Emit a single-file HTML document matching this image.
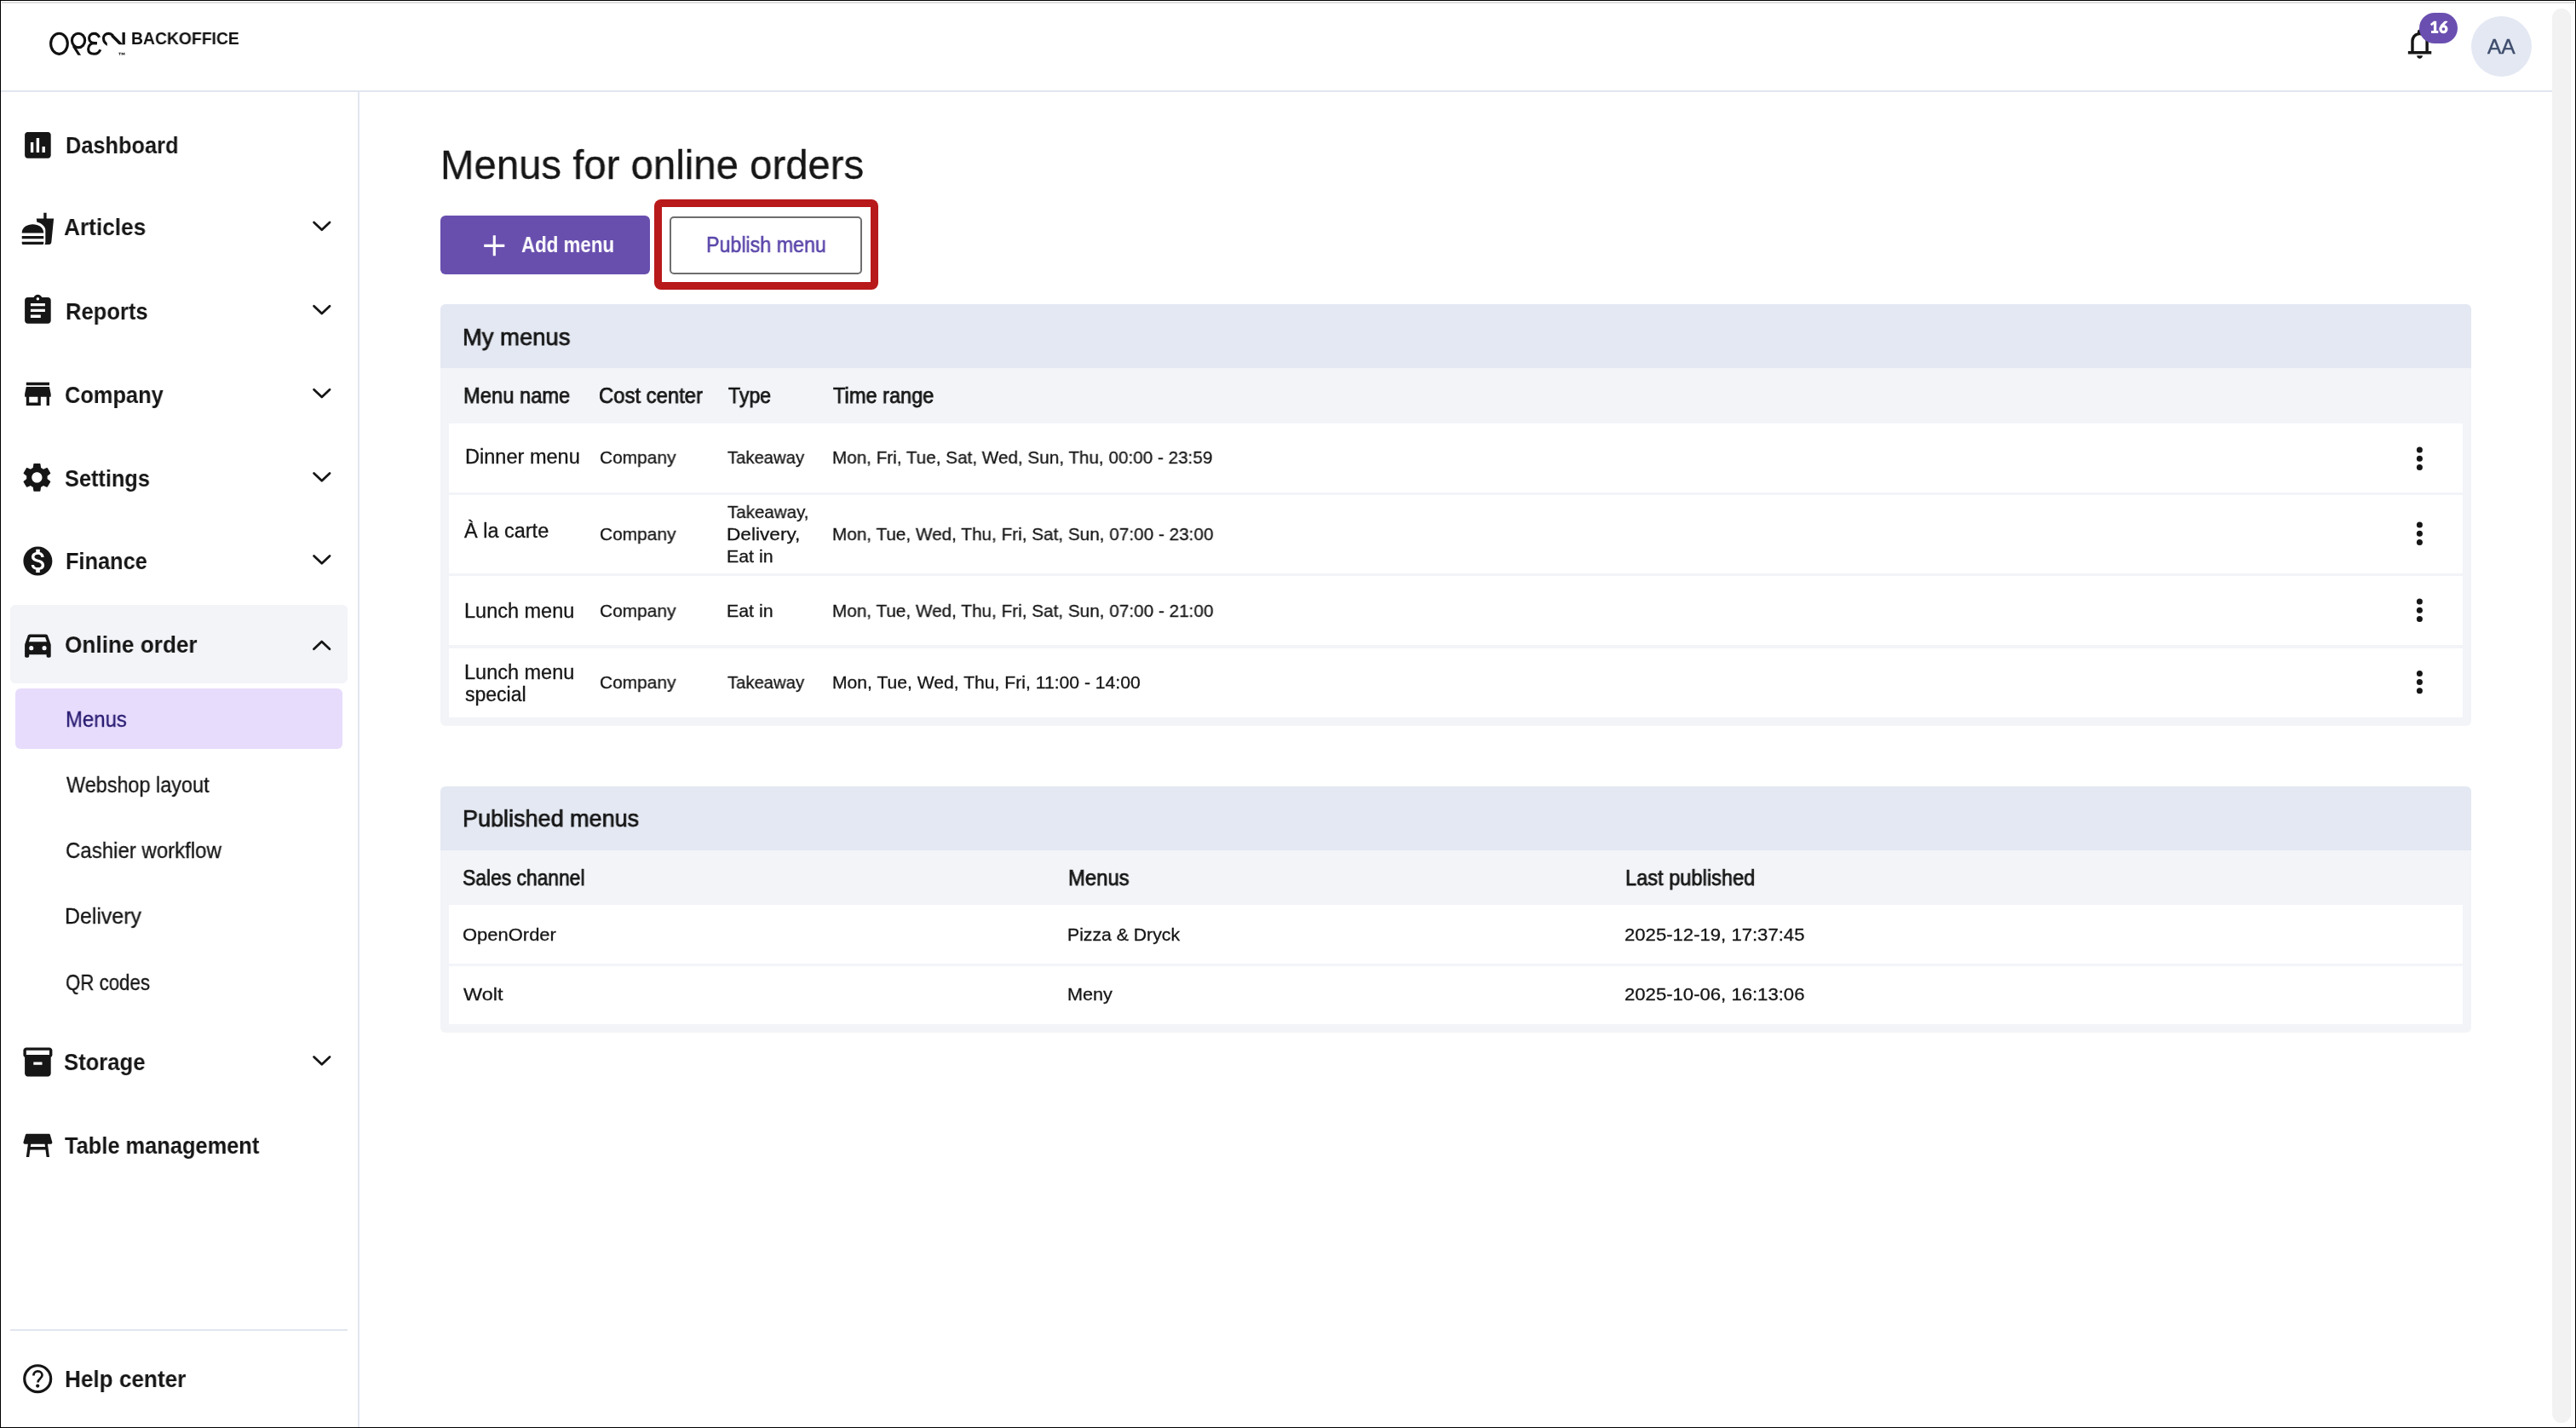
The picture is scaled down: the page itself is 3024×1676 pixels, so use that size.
<!DOCTYPE html>
<html><head><meta charset="utf-8"><style>
html,body{margin:0;padding:0;}
body{width:3024px;height:1676px;overflow:hidden;position:relative;background:#fff;font-family:"Liberation Sans",sans-serif;color:#161616;}
.t{position:absolute;white-space:nowrap;will-change:transform;}
.t.rg{-webkit-text-stroke:0.3px currentColor;}
.t.md{-webkit-text-stroke:0.75px currentColor;}
.abs{position:absolute;}
#pubTxt{-webkit-text-stroke:0.55px #5b46aa;}
#aa{-webkit-text-stroke:0.45px #3f4d6c;}
</style></head><body>
<!-- window frame -->
<div class="abs" style="left:0;top:0;width:3024px;height:1px;background:#000"></div>
<div class="abs" style="left:0;top:1675px;width:3024px;height:1px;background:#000"></div>
<div class="abs" style="left:0;top:0;width:1px;height:1676px;background:#000"></div>
<div class="abs" style="left:3023px;top:0;width:1px;height:1676px;background:#000"></div>
<div class="abs" style="left:2px;top:2px;width:3020px;height:2px;background:#dedede"></div>
<!-- scrollbar -->
<div class="abs" style="left:2996px;top:10px;width:22px;height:1660px;border-radius:11px;background:#f2f2f2"></div>
<!-- header border -->
<div class="abs" style="left:1px;top:106px;width:2995px;height:2px;background:#e1e6f0"></div>
<!-- sidebar border -->
<div class="abs" style="left:420px;top:108px;width:2px;height:1567px;background:#e1e6f0"></div>
<svg style="position:absolute;left:0;top:0" width="300" height="100" viewBox="0 0 300 100">
<defs><clipPath id="lc1"><rect x="0" y="0" width="300" height="64.8"/></clipPath>
<clipPath id="lc2"><rect x="0" y="0" width="300" height="52.2"/></clipPath>
<clipPath id="lc3"><path d="M0 0H300V47H125.8V100H0Z"/></clipPath></defs>
<g fill="none" stroke="#111" stroke-width="3.1">
<ellipse cx="69.45" cy="51.3" rx="9.85" ry="12.05"/>
<ellipse cx="92.05" cy="47.5" rx="7.6" ry="8.25"/>
<path clip-path="url(#lc1)" d="M86.3 54.0 L94.4 66.6"/>
<path d="M116.6 43.9 C115.4 40.6 113.2 39.35 110.5 39.35 C106.5 39.35 104.6 42 104.6 44.8 C104.6 48.3 107.4 50.65 111 50.65 L113.8 50.65"/>
<path d="M113.8 50.65 L110.8 50.65 C106 50.65 103.65 53.8 103.65 57.8 C103.65 61.4 106.3 63.3 110.6 63.3 C114.4 63.3 116.6 61.3 117.8 58.2"/>
<path clip-path="url(#lc3)" d="M126.6 52.6 C122.9 50.8 121.5 47.6 121.5 44.8 C121.5 41.6 124 39.35 127.6 39.35 C129.8 39.35 131.2 40.2 132.5 41.5"/>
<path clip-path="url(#lc2)" stroke-width="3.5" d="M131.4 41.6 L143.4 53.6"/>
</g>
<rect x="143.5" y="38" width="3.3" height="14.3" fill="#111"/>
<path fill="#111" d="M139.2 61.7h2.9v0.8h-1.05v2.3h-0.8v-2.3h-1.05z M142.7 61.7h0.9l0.95 1.6l0.95-1.6h0.9v3.1h-0.8v-1.9l-0.85 1.4h-0.4l-0.85-1.4v1.9h-0.8z"/>
</svg>
<!-- badge & avatar -->
<div class="abs" style="left:2936.2px;top:19px;width:71px;height:71px;margin-left:-35.5px;border-radius:50%;background:#e3e8f3"></div>
<!-- sidebar highlight -->
<div class="abs" style="left:12px;top:710px;width:396px;height:92px;border-radius:6px;background:#f2f4f8"></div>
<div class="abs" style="left:18px;top:808px;width:384px;height:71px;border-radius:6px;background:#e7dcfc"></div>
<div class="abs" style="left:12px;top:1560px;width:396px;height:2px;background:#e1e6f0"></div>
<!-- buttons -->
<div class="abs" style="left:517px;top:253.3px;width:246px;height:68.5px;border-radius:6px;background:#684fae"></div>
<div class="abs" style="left:768px;top:234px;width:263px;height:106px;border-radius:8px;background:#b8191b"></div>
<div class="abs" style="left:777px;top:243px;width:245px;height:88px;background:#fff"></div>
<div class="abs" style="left:786px;top:254px;width:226px;height:67.5px;box-sizing:border-box;border:2px solid #6e6e6e;border-radius:5px;background:#fff"></div>
<!-- card 1 -->
<div class="abs" style="left:517px;top:357px;width:2384px;height:495px;border-radius:6px;background:#f2f4f8;overflow:hidden">
  <div class="abs" style="left:0;top:0;width:2384px;height:75px;background:#e3e8f2"></div>
  <div class="abs" style="left:10px;top:140px;width:2364px;height:81px;background:#fff"></div>
  <div class="abs" style="left:10px;top:224px;width:2364px;height:92px;background:#fff"></div>
  <div class="abs" style="left:10px;top:319px;width:2364px;height:81px;background:#fff"></div>
  <div class="abs" style="left:10px;top:403.5px;width:2364px;height:81.5px;background:#fff"></div>
</div>
<!-- card 2 -->
<div class="abs" style="left:517px;top:923px;width:2384px;height:288.5px;border-radius:6px;background:#f2f4f8;overflow:hidden">
  <div class="abs" style="left:0;top:0;width:2384px;height:75px;background:#e3e8f2"></div>
  <div class="abs" style="left:10px;top:139px;width:2364px;height:68.5px;background:#fff"></div>
  <div class="abs" style="left:10px;top:211px;width:2364px;height:67.5px;background:#fff"></div>
</div>
<svg style="position:absolute;left:2819.75px;top:31.37px" width="41.10" height="41.10" viewBox="0 -960 960 960"><path fill="#161616" d="M160-200v-80h80v-280q0-83 50-147.5T420-792v-28q0-25 17.5-42.5T480-880q25 0 42.5 17.5T540-820v28q80 20 130 84.5T720-560v280h80v80H160Zm320 120q-33 0-56.5-23.5T400-160h160q0 33-23.5 56.5T480-80ZM320-280h320v-280q0-66-47-113t-113-47q-66 0-113 47t-47 113v280Z"/></svg>
<div class="abs" style="left:2840.4px;top:15px;width:45px;height:36px;border-radius:18px;background:#6a4fb0"></div>
<svg class="abs" style="left:2840px;top:15px" width="46" height="36" viewBox="2840 15 46 36">
<defs><clipPath id="bc1"><rect x="2840" y="24.8" width="46" height="20"/></clipPath></defs>
<g fill="#fff"><rect x="2856.9" y="24.8" width="3.3" height="12.5"/><rect x="2854" y="36.1" width="8.3" height="2.8"/></g>
<g fill="none" stroke="#fff" stroke-width="2.7" clip-path="url(#bc1)">
<path d="M2858.4 25.6 L2853.7 29.2"/>
<circle cx="2868.4" cy="34.1" r="3.5" stroke-width="3.3"/>
<path d="M2865.6 31.2 L2872.4 24.2" stroke-width="3.1"/>
</g></svg>
<svg style="position:absolute;left:23.80px;top:149.90px" width="40.80" height="40.80" viewBox="0 0 24 24"><path fill="#161616" fill-rule="evenodd" d="M19 3H5c-1.1 0-2 .9-2 2v14c0 1.1.9 2 2 2h14c1.1 0 2-.9 2-2V5c0-1.1-.9-2-2-2zM9 17H7v-7h2v7zm4 0h-2V7h2v10zm4 0h-2v-4h2v4z"/></svg><svg style="position:absolute;left:23.90px;top:248.30px" width="40.80" height="40.80" viewBox="0 0 24 24"><path fill="#161616" fill-rule="evenodd" d="M18.06 22.99h1.66c.84 0 1.53-.64 1.63-1.46L23 5.05h-5V1h-1.97v4.05h-4.97l.3 2.34c1.71.47 3.31 1.32 4.27 2.26.96.94 1.62 1.91 1.62 3.49v8.16c0 .7-.27 1.28-.54 1.69zM1 21.99V21h15.03v.99c0 .55-.45 1-1.01 1H2.01c-.56 0-1.01-.45-1.01-1zm15.03-7c0-8-15.03-8-15.03 0h15.03zM1.02 17h15v2h-15z"/></svg><svg style="position:absolute;left:23.90px;top:344.10px" width="40.80" height="40.80" viewBox="0 0 24 24"><path fill="#161616" fill-rule="evenodd" d="M19 3h-4.18C14.4 1.84 13.3 1 12 1c-1.3 0-2.4.84-2.82 2H5c-1.1 0-2 .9-2 2v14c0 1.1.9 2 2 2h14c1.1 0 2-.9 2-2V5c0-1.1-.9-2-2-2zm-7 0c.55 0 1 .45 1 1s-.45 1-1 1-1-.45-1-1 .45-1 1-1zm2 14H7v-2h7v2zm3-4H7v-2h10v2zm0-4H7V7h10v2z"/></svg><svg style="position:absolute;left:23.60px;top:441.90px" width="40.80" height="40.80" viewBox="0 0 24 24"><path fill="#161616" fill-rule="evenodd" d="M20 4H4v2h16V4zm1 10v-2l-1-5H4l-1 5v2h1v6h10v-6h4v6h2v-6h1zm-9 4H6v-4h6v4z"/></svg><svg style="position:absolute;left:22.91px;top:539.80px" width="40.80" height="40.80" viewBox="0 0 24 24"><path fill="#161616" fill-rule="evenodd" d="M19.14 12.94c.04-.3.06-.61.06-.94 0-.32-.02-.64-.07-.94l2.03-1.58c.18-.14.23-.41.12-.61l-1.92-3.32c-.12-.22-.37-.29-.59-.22l-2.39.96c-.5-.38-1.03-.7-1.62-.94l-.36-2.54c-.04-.24-.24-.41-.48-.41h-3.84c-.24 0-.43.17-.47.41l-.36 2.54c-.59.24-1.13.57-1.62.94l-2.39-.96c-.22-.08-.47 0-.59.22L2.74 8.87c-.12.21-.08.47.12.61l2.03 1.58c-.05.3-.09.63-.09.94s.02.64.07.94l-2.03 1.58c-.18.14-.23.41-.12.61l1.92 3.32c.12.22.37.29.59.22l2.39-.96c.5.38 1.03.7 1.62.94l.36 2.54c.05.24.24.41.48.41h3.84c.24 0 .44-.17.47-.41l.36-2.54c.59-.24 1.13-.56 1.62-.94l2.39.96c.22.08.47 0 .59-.22l1.92-3.32c.12-.22.07-.47-.12-.61l-2.01-1.58zM12 15.6c-1.98 0-3.6-1.62-3.6-3.6s1.62-3.6 3.6-3.6 3.6 1.62 3.6 3.6-1.62 3.6-3.6 3.6z"/></svg><svg style="position:absolute;left:23.90px;top:637.60px" width="40.80" height="40.80" viewBox="0 0 24 24"><path fill="#161616" fill-rule="evenodd" d="M12 2C6.48 2 2 6.48 2 12s4.48 10 10 10 10-4.48 10-10S17.52 2 12 2zm1.41 16.09V20h-2.67v-1.93c-1.71-.36-3.16-1.46-3.27-3.4h1.96c.1 1.05.82 1.87 2.650 1.87 1.96 0 2.4-.98 2.4-1.59 0-.83-.44-1.61-2.67-2.14-2.48-.6-4.18-1.62-4.18-3.670 0-1.72 1.39-2.84 3.11-3.21V4h2.67v1.95c1.86.45 2.79 1.86 2.85 3.39H14.3c-.05-1.11-.64-1.87-2.22-1.87-1.5 0-2.4.68-2.4 1.64 0 .84.65 1.39 2.67 1.91s4.18 1.39 4.18 3.91c-.01 1.83-1.38 2.83-3.12 3.16z"/></svg><svg style="position:absolute;left:23.90px;top:736.00px" width="40.80" height="40.80" viewBox="0 0 24 24"><path fill="#161616" fill-rule="evenodd" d="M18.92 6.01C18.72 5.42 18.16 5 17.5 5h-11c-.66 0-1.21.42-1.42 1.01L3 12v8c0 .55.45 1 1 1h1c.55 0 1-.45 1-1v-1h12v1c0 .55.45 1 1 1h1c.55 0 1-.45 1-1v-8l-2.08-5.99zM6.85 7h10.29l1.08 3.11H5.77L6.85 7zM9 14.5a1.5 1.5 0 1 1-3 0a1.5 1.5 0 1 1 3 0zM18 14.5a1.5 1.5 0 1 1-3 0a1.5 1.5 0 1 1 3 0z"/></svg><svg style="position:absolute;left:24.10px;top:1225.80px" width="40.80" height="40.80" viewBox="0 0 24 24"><path fill="#161616" fill-rule="evenodd" d="M20 2H4c-1 0-2 .9-2 2v3.01c0 .72.43 1.34 1 1.69V20c0 1.1 1.1 2 2 2h14c.9 0 2-.9 2-2V8.7c.57-.35 1-.97 1-1.690V4c0-1.1-1-2-2-2zm-5 12H9v-2h6v2zm5-7H4V4l16-.02V7z"/></svg><svg style="position:absolute;left:24.10px;top:1324.20px" width="40.80" height="40.80" viewBox="0 0 24 24"><path fill="#161616" fill-rule="evenodd" d="M21.96 9.73l-1.43-5c-.12-.43-.51-.73-.96-.73H4.43c-.45 0-.84.3-.96.73l-1.43 5c-.18.63.3 1.27.96 1.27h2.2L4 20h2l.67-5h10.67l.66 5h2l-1.2-9H21c.66 0 1.14-.64.96-1.27zM6.93 13l.27-2h9.6l.27 2H6.93z"/></svg><svg class="abs" style="left:0;top:1580px" width="80" height="80" viewBox="0 1580 80 80"><circle cx="44.2" cy="1618.2" r="15.45" fill="none" stroke="#161616" stroke-width="3.2"/><path d="M39.4 1614.4 C39.4 1611.3 41.6 1609.4 44.4 1609.4 C47.3 1609.4 49.5 1611.3 49.5 1614 C49.5 1617.6 44.5 1618.3 44.5 1622.4" fill="none" stroke="#161616" stroke-width="2.7"/><circle cx="44.2" cy="1626.6" r="2.1" fill="#161616"/></svg>
<svg class="abs" style="left:0;top:0" width="3024" height="1676">
<path d="M368.55 261.00 L377.80 269.80 L387.05 261.00" fill="none" stroke="#161616" stroke-width="2.75" stroke-linecap="round" stroke-linejoin="round"/><path d="M368.55 359.20 L377.80 368.00 L387.05 359.20" fill="none" stroke="#161616" stroke-width="2.75" stroke-linecap="round" stroke-linejoin="round"/><path d="M368.55 457.30 L377.80 466.10 L387.05 457.30" fill="none" stroke="#161616" stroke-width="2.75" stroke-linecap="round" stroke-linejoin="round"/><path d="M368.55 555.40 L377.80 564.20 L387.05 555.40" fill="none" stroke="#161616" stroke-width="2.75" stroke-linecap="round" stroke-linejoin="round"/><path d="M368.55 652.50 L377.80 661.30 L387.05 652.50" fill="none" stroke="#161616" stroke-width="2.75" stroke-linecap="round" stroke-linejoin="round"/><path d="M368.55 1240.50 L377.80 1249.30 L387.05 1240.50" fill="none" stroke="#161616" stroke-width="2.75" stroke-linecap="round" stroke-linejoin="round"/><path d="M368.45 761.80 L377.70 753.00 L386.95 761.80" fill="none" stroke="#161616" stroke-width="2.75" stroke-linecap="round" stroke-linejoin="round"/>
<circle cx="2840.4" cy="528.1" r="3.5" fill="#161616"/><circle cx="2840.4" cy="538.3" r="3.5" fill="#161616"/><circle cx="2840.4" cy="548.5" r="3.5" fill="#161616"/><circle cx="2840.4" cy="616.1" r="3.5" fill="#161616"/><circle cx="2840.4" cy="626.3" r="3.5" fill="#161616"/><circle cx="2840.4" cy="636.5" r="3.5" fill="#161616"/><circle cx="2840.4" cy="706.1" r="3.5" fill="#161616"/><circle cx="2840.4" cy="716.3" r="3.5" fill="#161616"/><circle cx="2840.4" cy="726.5" r="3.5" fill="#161616"/><circle cx="2840.4" cy="790.4" r="3.5" fill="#161616"/><circle cx="2840.4" cy="800.6" r="3.5" fill="#161616"/><circle cx="2840.4" cy="810.8" r="3.5" fill="#161616"/>
<path d="M568.2 288.4 H592.3 M580.3 276.2 V300.3" stroke="#fff" stroke-width="3.1"/>
</svg>
<div class="t" id="nDash" style="left:77.04px;top:157.00px;font-size:28px;line-height:28px;font-weight:700;color:#161616;letter-spacing:0.000px;transform:scaleX(0.9057);transform-origin:0 0;">Dashboard</div><div class="t" id="nArt" style="left:75.04px;top:253.00px;font-size:28px;line-height:28px;font-weight:700;color:#161616;letter-spacing:0.000px;transform:scaleX(0.9368);transform-origin:0 0;">Articles</div><div class="t" id="nRep" style="left:76.54px;top:352.00px;font-size:28px;line-height:28px;font-weight:700;color:#161616;letter-spacing:0.000px;transform:scaleX(0.9127);transform-origin:0 0;">Reports</div><div class="t" id="nCom" style="left:75.54px;top:450.00px;font-size:28px;line-height:28px;font-weight:700;color:#161616;letter-spacing:0.000px;transform:scaleX(0.9071);transform-origin:0 0;">Company</div><div class="t" id="nSet" style="left:75.54px;top:548.00px;font-size:28px;line-height:28px;font-weight:700;color:#161616;letter-spacing:0.000px;transform:scaleX(0.9038);transform-origin:0 0;">Settings</div><div class="t" id="nFin" style="left:76.54px;top:645.00px;font-size:28px;line-height:28px;font-weight:700;color:#161616;letter-spacing:0.000px;transform:scaleX(0.9050);transform-origin:0 0;">Finance</div><div class="t" id="nOnl" style="left:75.54px;top:743.00px;font-size:28px;line-height:28px;font-weight:700;color:#161616;letter-spacing:0.000px;transform:scaleX(0.9346);transform-origin:0 0;">Online order</div><div class="t rg" id="nMen" style="left:76.65px;top:832.00px;font-size:25px;line-height:25px;font-weight:400;color:#281b72;letter-spacing:0.000px;transform:scaleX(0.9571);transform-origin:0 0;">Menus</div><div class="t rg" id="nWeb" style="left:77.75px;top:909.00px;font-size:25px;line-height:25px;font-weight:400;color:#161616;letter-spacing:0.000px;transform:scaleX(0.9369);transform-origin:0 0;">Webshop layout</div><div class="t rg" id="nCas" style="left:76.75px;top:986.00px;font-size:25px;line-height:25px;font-weight:400;color:#161616;letter-spacing:0.000px;transform:scaleX(0.9611);transform-origin:0 0;">Cashier workflow</div><div class="t rg" id="nDel" style="left:75.75px;top:1063.00px;font-size:25px;line-height:25px;font-weight:400;color:#161616;letter-spacing:0.000px;transform:scaleX(0.9955);transform-origin:0 0;">Delivery</div><div class="t rg" id="nQR" style="left:76.75px;top:1141.00px;font-size:25px;line-height:25px;font-weight:400;color:#161616;letter-spacing:0.000px;transform:scaleX(0.8901);transform-origin:0 0;">QR codes</div><div class="t" id="nSto" style="left:75.04px;top:1233.00px;font-size:28px;line-height:28px;font-weight:700;color:#161616;letter-spacing:0.000px;transform:scaleX(0.9156);transform-origin:0 0;">Storage</div><div class="t" id="nTab" style="left:76.04px;top:1331.00px;font-size:28px;line-height:28px;font-weight:700;color:#161616;letter-spacing:0.000px;transform:scaleX(0.9076);transform-origin:0 0;">Table management</div><div class="t" id="nHelp" style="left:75.54px;top:1605.00px;font-size:28px;line-height:28px;font-weight:700;color:#161616;letter-spacing:0.000px;transform:scaleX(0.9333);transform-origin:0 0;">Help center</div><div class="t" id="logoTxt" style="left:153.93px;top:36.00px;font-size:19.5px;line-height:19.5px;font-weight:700;color:#111;letter-spacing:0.000px;transform:scaleX(0.9921);transform-origin:0 0;">BACKOFFICE</div><div class="t" id="aa" style="left:2919.92px;top:43.00px;font-size:24.5px;line-height:24.5px;font-weight:400;color:#3f4d6c;letter-spacing:0.000px;">AA</div><div class="t rg" id="title" style="left:517.14px;top:170.00px;font-size:48px;line-height:48px;font-weight:400;color:#161616;letter-spacing:0.000px;transform:scaleX(0.9860);transform-origin:0 0;">Menus for online orders</div><div class="t" id="addTxt" style="left:611.58px;top:275.00px;font-size:25px;line-height:25px;font-weight:700;color:#fff;letter-spacing:0.000px;transform:scaleX(0.8917);transform-origin:0 0;">Add menu</div><div class="t" id="pubTxt" style="left:829.28px;top:275.00px;font-size:25px;line-height:25px;font-weight:400;color:#5b46aa;letter-spacing:0.000px;transform:scaleX(0.9298);transform-origin:0 0;">Publish menu</div><div class="t md" id="myMenus" style="left:543.24px;top:382.00px;font-size:28px;line-height:28px;font-weight:400;color:#161616;letter-spacing:0.000px;transform:scaleX(0.9787);transform-origin:0 0;">My menus</div><div class="t md" id="h1" style="left:543.85px;top:452.00px;font-size:25px;line-height:25px;font-weight:400;color:#161616;letter-spacing:0.000px;transform:scaleX(0.9490);transform-origin:0 0;">Menu name</div><div class="t md" id="h2" style="left:703.25px;top:452.00px;font-size:25px;line-height:25px;font-weight:400;color:#161616;letter-spacing:0.000px;transform:scaleX(0.9544);transform-origin:0 0;">Cost center</div><div class="t md" id="h3" style="left:854.65px;top:452.00px;font-size:25px;line-height:25px;font-weight:400;color:#161616;letter-spacing:0.000px;transform:scaleX(0.9229);transform-origin:0 0;">Type</div><div class="t md" id="h4" style="left:977.65px;top:452.00px;font-size:25px;line-height:25px;font-weight:400;color:#161616;letter-spacing:0.000px;transform:scaleX(0.9433);transform-origin:0 0;">Time range</div><div class="t rg" id="r1a" style="left:545.59px;top:525.00px;font-size:23px;line-height:23px;font-weight:400;color:#161616;letter-spacing:0.000px;transform:scaleX(1.0234);transform-origin:0 0;">Dinner menu</div><div class="t rg" id="r1b" style="left:703.53px;top:526.00px;font-size:21px;line-height:21px;font-weight:400;color:#161616;letter-spacing:0.000px;transform:scaleX(0.9945);transform-origin:0 0;">Company</div><div class="t rg" id="r1c" style="left:853.93px;top:526.00px;font-size:21px;line-height:21px;font-weight:400;color:#161616;letter-spacing:0.000px;transform:scaleX(0.9639);transform-origin:0 0;">Takeaway</div><div class="t rg" id="r1d" style="left:977.03px;top:526.00px;font-size:21px;line-height:21px;font-weight:400;color:#161616;letter-spacing:0.000px;transform:scaleX(0.9845);transform-origin:0 0;">Mon, Fri, Tue, Sat, Wed, Sun, Thu, 00:00 - 23:59</div><div class="t rg" id="r2a" style="left:544.99px;top:612.00px;font-size:23px;line-height:23px;font-weight:400;color:#161616;letter-spacing:0.000px;transform:scaleX(1.0209);transform-origin:0 0;">À la carte</div><div class="t rg" id="r2b" style="left:703.53px;top:616.00px;font-size:21px;line-height:21px;font-weight:400;color:#161616;letter-spacing:0.000px;transform:scaleX(0.9945);transform-origin:0 0;">Company</div><div class="t rg" id="r2c1" style="left:853.93px;top:590.00px;font-size:21px;line-height:21px;font-weight:400;color:#161616;letter-spacing:0.000px;transform:scaleX(0.9772);transform-origin:0 0;">Takeaway,</div><div class="t rg" id="r2c2" style="left:852.93px;top:616.00px;font-size:21px;line-height:21px;font-weight:400;color:#161616;letter-spacing:0.000px;transform:scaleX(1.0781);transform-origin:0 0;">Delivery,</div><div class="t rg" id="r2c3" style="left:852.93px;top:642.00px;font-size:21px;line-height:21px;font-weight:400;color:#161616;letter-spacing:0.000px;transform:scaleX(1.0157);transform-origin:0 0;">Eat in</div><div class="t rg" id="r2d" style="left:977.03px;top:616.00px;font-size:21px;line-height:21px;font-weight:400;color:#161616;letter-spacing:0.000px;transform:scaleX(0.9870);transform-origin:0 0;">Mon, Tue, Wed, Thu, Fri, Sat, Sun, 07:00 - 23:00</div><div class="t rg" id="r3a" style="left:544.79px;top:706.00px;font-size:23px;line-height:23px;font-weight:400;color:#161616;letter-spacing:0.000px;transform:scaleX(1.0213);transform-origin:0 0;">Lunch menu</div><div class="t rg" id="r3b" style="left:703.53px;top:706.00px;font-size:21px;line-height:21px;font-weight:400;color:#161616;letter-spacing:0.000px;transform:scaleX(0.9945);transform-origin:0 0;">Company</div><div class="t rg" id="r3c" style="left:852.93px;top:706.00px;font-size:21px;line-height:21px;font-weight:400;color:#161616;letter-spacing:0.000px;transform:scaleX(1.0157);transform-origin:0 0;">Eat in</div><div class="t rg" id="r3d" style="left:977.03px;top:706.00px;font-size:21px;line-height:21px;font-weight:400;color:#161616;letter-spacing:0.000px;transform:scaleX(0.9870);transform-origin:0 0;">Mon, Tue, Wed, Thu, Fri, Sat, Sun, 07:00 - 21:00</div><div class="t rg" id="r4a1" style="left:544.79px;top:778.00px;font-size:23px;line-height:23px;font-weight:400;color:#161616;letter-spacing:0.000px;transform:scaleX(1.0213);transform-origin:0 0;">Lunch menu</div><div class="t rg" id="r4a2" style="left:545.79px;top:804.00px;font-size:23px;line-height:23px;font-weight:400;color:#161616;letter-spacing:0.000px;transform:scaleX(1.0008);transform-origin:0 0;">special</div><div class="t rg" id="r4b" style="left:703.53px;top:790.00px;font-size:21px;line-height:21px;font-weight:400;color:#161616;letter-spacing:0.000px;transform:scaleX(0.9945);transform-origin:0 0;">Company</div><div class="t rg" id="r4c" style="left:853.93px;top:790.00px;font-size:21px;line-height:21px;font-weight:400;color:#161616;letter-spacing:0.000px;transform:scaleX(0.9639);transform-origin:0 0;">Takeaway</div><div class="t rg" id="r4d" style="left:977.03px;top:790.00px;font-size:21px;line-height:21px;font-weight:400;color:#161616;letter-spacing:0.000px;transform:scaleX(1.0059);transform-origin:0 0;">Mon, Tue, Wed, Thu, Fri, 11:00 - 14:00</div><div class="t md" id="pubMenus" style="left:543.04px;top:947.00px;font-size:28px;line-height:28px;font-weight:400;color:#161616;letter-spacing:0.000px;transform:scaleX(0.9642);transform-origin:0 0;">Published menus</div><div class="t md" id="p1" style="left:542.65px;top:1018.00px;font-size:25px;line-height:25px;font-weight:400;color:#161616;letter-spacing:0.000px;transform:scaleX(0.9136);transform-origin:0 0;">Sales channel</div><div class="t md" id="p2" style="left:1253.75px;top:1018.00px;font-size:25px;line-height:25px;font-weight:400;color:#161616;letter-spacing:0.000px;transform:scaleX(0.9550);transform-origin:0 0;">Menus</div><div class="t md" id="p3" style="left:1907.75px;top:1018.00px;font-size:25px;line-height:25px;font-weight:400;color:#161616;letter-spacing:0.000px;transform:scaleX(0.9444);transform-origin:0 0;">Last published</div><div class="t rg" id="q1a" style="left:542.93px;top:1086.00px;font-size:21px;line-height:21px;font-weight:400;color:#161616;letter-spacing:0.000px;transform:scaleX(1.0462);transform-origin:0 0;">OpenOrder</div><div class="t rg" id="q1b" style="left:1253.03px;top:1086.00px;font-size:21px;line-height:21px;font-weight:400;color:#161616;letter-spacing:0.000px;transform:scaleX(1.0101);transform-origin:0 0;">Pizza &amp; Dryck</div><div class="t rg" id="q1c" style="left:1907.03px;top:1086.00px;font-size:21px;line-height:21px;font-weight:400;color:#161616;letter-spacing:0.000px;transform:scaleX(1.0528);transform-origin:0 0;">2025-12-19, 17:37:45</div><div class="t rg" id="q2a" style="left:543.93px;top:1156.00px;font-size:21px;line-height:21px;font-weight:400;color:#161616;letter-spacing:0.000px;transform:scaleX(1.1147);transform-origin:0 0;">Wolt</div><div class="t rg" id="q2b" style="left:1253.03px;top:1156.00px;font-size:21px;line-height:21px;font-weight:400;color:#161616;letter-spacing:0.000px;transform:scaleX(1.0308);transform-origin:0 0;">Meny</div><div class="t rg" id="q2c" style="left:1907.03px;top:1156.00px;font-size:21px;line-height:21px;font-weight:400;color:#161616;letter-spacing:0.000px;transform:scaleX(1.0528);transform-origin:0 0;">2025-10-06, 16:13:06</div>
</body></html>
